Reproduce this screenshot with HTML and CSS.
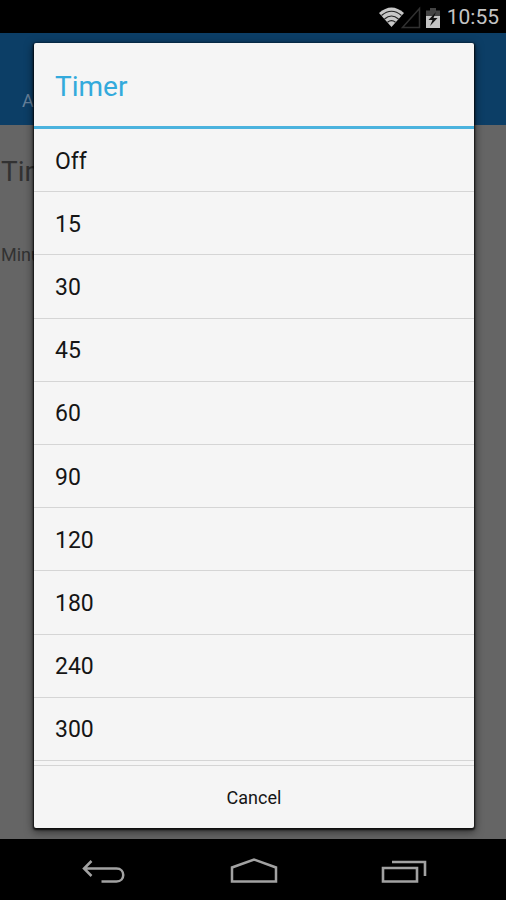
FILE: index.html
```html
<!DOCTYPE html>
<html lang="en">
<head>
<meta charset="utf-8">
<meta name="viewport" content="width=device-width, initial-scale=1">
<title>Timer</title>
<link rel="stylesheet" href="styles.css">
</head>
<body>
<div class="screen">
  <header class="status">
    <svg class="status-icons" width="64" height="24" viewBox="0 0 64 24" aria-hidden="true">
      <path d="M2 8Q14.500 -3 27 8L14.500 22Z" fill="#c8c8c8"/>
      <g fill="none" stroke="#222" stroke-width="1.200">
        <path d="M4.500 10.500Q14.500 2 24.500 10.500"/>
        <path d="M7.500 14Q14.500 8 21.500 14"/>
        <path d="M10.500 17.300Q14.500 14 18.500 17.300"/>
      </g>
      <path d="M25.500 22.500H42.500V3.500Z" fill="none" stroke="#303030" stroke-width="1.500"/>
      <path d="M53 3h6v2.500h4V12H49V5.500h4z" fill="#444"/>
      <path d="M49 11h14v12H49z" fill="#c4c4c4"/>
      <path d="M59 7l-7.500 8h4l-2.500 6 7.500-8h-4z" fill="#111"/>
    </svg>
    <time class="clock">10:55</time>
  </header>
  <main class="app">
    <div class="app-bar"><span class="tab">Alarm</span></div>
    <div class="page">
      <h2 class="page-title">Timer</h2>
      <p class="page-label">Minutes</p>
    </div>
    <section class="dialog" role="dialog" aria-labelledby="dialog-title">
      <h1 class="dialog-title" id="dialog-title">Timer</h1>
      <ul class="options">
        <li class="option"><button type="button">Off</button></li>
        <li class="option"><button type="button">15</button></li>
        <li class="option"><button type="button">30</button></li>
        <li class="option"><button type="button">45</button></li>
        <li class="option"><button type="button">60</button></li>
        <li class="option"><button type="button">90</button></li>
        <li class="option"><button type="button">120</button></li>
        <li class="option"><button type="button">180</button></li>
        <li class="option"><button type="button">240</button></li>
        <li class="option"><button type="button">300</button></li>
      </ul>
      <button class="cancel" type="button">Cancel</button>
    </section>
  </main>
  <nav class="nav">
    <button type="button" aria-label="Back">
      <svg width="48" height="30" viewBox="0 0 48 30">
        <path d="M5 11.500H37.500C46.500 11.500 46.500 24.500 37.500 24.500H22.500M12.500 4L5 11.500L12.500 19" fill="none" stroke="#a2a2a2" stroke-width="2.500"/>
      </svg>
    </button>
    <button type="button" aria-label="Home">
      <svg width="48" height="30" viewBox="0 0 48 30">
        <path d="M2 24.500V10.500L24 2.500L46 10.500V24.500Z" fill="none" stroke="#a2a2a2" stroke-width="2.500"/>
      </svg>
    </button>
    <button type="button" aria-label="Recent apps">
      <svg width="48" height="30" viewBox="0 0 48 30">
        <path d="M2 11H36V24.500H2ZM11 5H44V19" fill="none" stroke="#a2a2a2" stroke-width="2.600"/>
      </svg>
    </button>
  </nav>
</div>
</body>
</html>
```
FILE: styles.css
```css
* {
  box-sizing: border-box;
}

body {
  margin: 0;
  background: #000;
  font-family: Roboto, "Liberation Sans", sans-serif;
}

button {
  border: 0;
  padding: 0;
  background: none;
  font: inherit;
  color: inherit;
  cursor: pointer;
}

h1,
h2,
p,
ul {
  margin: 0;
  padding: 0;
  font-weight: 400;
  list-style: none;
}

.screen {
  display: flex;
  flex-direction: column;
  min-height: 100vh;
}

.status {
  display: flex;
  align-items: center;
  justify-content: flex-end;
  gap: 6px;
  height: 33px;
  padding: 1px 7px 0;
  color: #c4c4c4;
}

.clock {
  font-size: 21px;
  line-height: 32px;
}

.app {
  position: relative;
  display: flex;
  flex: 1;
  flex-direction: column;
  overflow: hidden;
  background: #656565;
}

.app-bar {
  display: flex;
  align-items: flex-end;
  height: 92px;
  padding: 0 22px 14px;
  background: #0c3e66;
  color: #66809a;
}

.tab {
  width: 12px;
  overflow: hidden;
  font-size: 18px;
  line-height: 20px;
}

.page {
  display: flex;
  flex-direction: column;
  gap: 50px;
  width: 34px;
  padding: 30px 0 30px 1px;
  overflow: hidden;
  color: #323232;
}

.page-title {
  overflow: hidden;
  font-size: 28px;
  line-height: 34px;
}

.page-label {
  overflow: hidden;
  font-size: 18px;
  line-height: 32px;
}

.dialog {
  position: absolute;
  inset: 10px 32px 11px 34px;
  display: flex;
  flex-direction: column;
  border-radius: 2px;
  background: #f5f5f5;
  color: #151515;
  box-shadow: 0 1px 2px 1px rgba(0, 0, 0, 0.8), 0 3px 9px 1px rgba(0, 0, 0, 0.5);
}

.dialog-title {
  padding: 24px 21px 20px;
  border-bottom: 3px solid #4bb3de;
  color: #33aadc;
  font-size: 28px;
  line-height: 39px;
}

.options {
  display: flex;
  flex: 1;
  flex-direction: column;
  padding-bottom: 4px;
}

.option {
  display: flex;
  flex: 1;
  border-bottom: 1px solid #d5d5d5;
}

.option button {
  flex: 1;
  padding: 2px 21px 0;
  font-size: 23px;
  text-align: left;
}

.cancel {
  height: 63px;
  border-top: 1px solid #d5d5d5;
  font-size: 18px;
}

.nav {
  display: flex;
  align-items: center;
  justify-content: center;
  height: 61px;
  padding: 4px 0 0 2px;
}

.nav button {
  display: flex;
  justify-content: center;
  width: 30%;
}
```
